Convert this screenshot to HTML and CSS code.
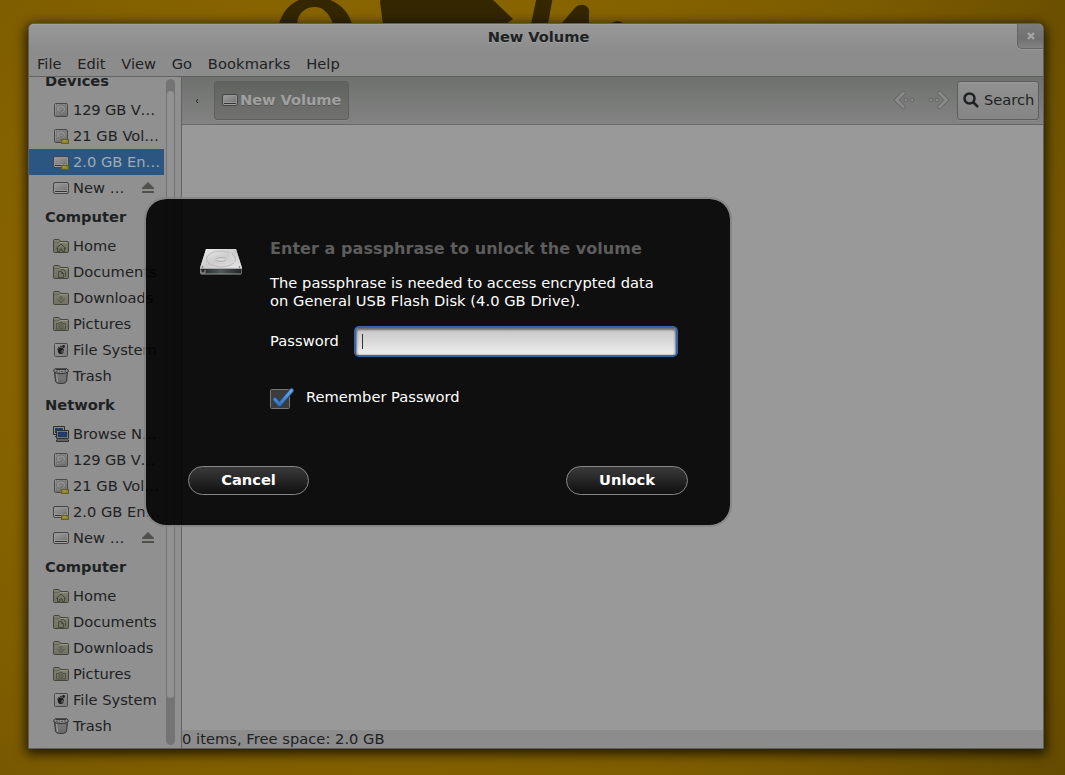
FILE: index.html
```html
<!DOCTYPE html>
<html lang="en">
<head>
<meta charset="utf-8">
<title>New Volume</title>
<link rel="stylesheet" href="styles.css">
</head>
<body>
<svg class="defs" aria-hidden="true">
  <defs>
    <linearGradient id="gm" x1="0" y1="0" x2="1" y2="1"><stop offset="0" stop-color="#999"/><stop offset="1" stop-color="#777"/></linearGradient>
    <linearGradient id="gf" x1="0" y1="0" x2="0" y2="1"><stop offset="0" stop-color="#7f8070"/><stop offset="1" stop-color="#717263"/></linearGradient>
    <linearGradient id="gd" x1="0" y1="0" x2="1" y2="1"><stop offset="0" stop-color="#eee"/><stop offset=".5" stop-color="#ccc"/><stop offset="1" stop-color="#e6e6e6"/></linearGradient>
    <linearGradient id="ge" x1="0" y1="0" x2="1" y2="0"><stop offset="0" stop-color="#222"/><stop offset=".5" stop-color="#50585a"/><stop offset="1" stop-color="#222"/></linearGradient>
    <linearGradient id="gc" x1="0" y1="0" x2="0" y2="1"><stop offset="0" stop-color="#6aa7e6"/><stop offset="1" stop-color="#3674b8"/></linearGradient>
    <symbol id="hdd" viewBox="0 0 16 16">
      <rect x="1.5" y="1.5" width="13" height="13" rx="1.2" fill="url(#gm)" stroke="#484848"/>
      <path d="M2.5 13h11" stroke="#606060"/>
      <ellipse cx="8" cy="7" rx="4.800" ry="4.200" fill="#8f8f8f" stroke="#6c6c6c" stroke-width=".9"/>
      <path d="M5 9.500q1 1 3 .3l3-2.300M6 7.500q.5-1.500 2.500-1.500t1.500 1.500-2.500 1.200" fill="none" stroke="#696969" stroke-width=".9"/>
      <path d="M3 3h1M12 3h1M3 11h1M12 11h1" stroke="#5d5d5d"/>
    </symbol>
    <symbol id="lock" viewBox="0 0 8 8">
      <path d="M2.500 4V2.300q0-1 1.500-1t1.500 1V4" fill="none" stroke="#77745b"/>
      <rect x=".5" y="3.500" width="7" height="4" fill="#8b8428" stroke="#646023"/>
      <path d="M2 5h3" stroke="#aaa467"/>
    </symbol>
    <symbol id="usb" viewBox="0 0 16 16">
      <rect x=".5" y="2.500" width="15" height="11" rx="1.500" fill="#969696" stroke="#454545"/>
      <path d="M2 4h12v6H2z" fill="url(#gm)"/>
      <path d="M2 11.500h12" stroke="#333"/>
      <path d="M2 12.500h12" stroke="#a0a0a0"/>
    </symbol>
    <symbol id="hddlock" viewBox="0 0 16 16"><use href="#hdd" width="16" height="16"/><use href="#lock" x="8" y="8" width="8" height="8"/></symbol>
    <symbol id="usblock" viewBox="0 0 16 16"><use href="#usb" width="16" height="16"/><use href="#lock" x="8" y="8" width="8" height="8"/></symbol>
    <symbol id="folder" viewBox="0 0 16 16">
      <path d="M.5 2.500q0-1 1-1h4q1 0 1.500 1l.5 1h7q1 0 1 1v9q0 1-1 1h-13q-1 0-1-1z" fill="url(#gf)" stroke="#43443a"/>
      <path d="M1.500 5.500h4l1.500-1h7.500" fill="none" stroke="#999985"/>
      <path d="M1 5h4.500L7 3.500" fill="none" stroke="#4b4c41" stroke-width=".8"/>
    </symbol>
    <symbol id="home" viewBox="0 0 16 16"><use href="#folder" width="16" height="16"/><path d="M2.800 10.800 8 6l5.200 4.800M4.500 10v3.500h2.300v-2.500h2.400v2.500h2.300V10" fill="none" stroke="#43443a"/></symbol>
    <symbol id="docs" viewBox="0 0 16 16"><use href="#folder" width="16" height="16"/><path d="M5.500 7.500h3l2 2v4h-5zM8.500 7.500v2h2M7.500 5.700h3q2 1 2 3v4" fill="none" stroke="#43443a" stroke-width=".9"/></symbol>
    <symbol id="down" viewBox="0 0 16 16"><use href="#folder" width="16" height="16"/><path d="m4.300 8.700 3.700 3.800 3.700-3.800M8 6v1M8 8v2M6.300 7.700h1M8.700 7.700h1" fill="none" stroke="#43443a" stroke-width=".9"/></symbol>
    <symbol id="pics" viewBox="0 0 16 16"><use href="#folder" width="16" height="16"/><path d="M3.500 7.500H6l1-1.200h2l1 1.200h2.500v5.500h-9z" fill="none" stroke="#4f5045"/><circle cx="8" cy="10" r="2.200" fill="none" stroke="#4f5045"/><circle cx="8" cy="10" r=".8" fill="#4f5045"/></symbol>
    <symbol id="fs" viewBox="0 0 16 16">
      <rect x="1.500" y="1.500" width="13" height="13" rx="1" fill="url(#gm)" stroke="#484848"/>
      <ellipse cx="7.800" cy="8.700" rx="3" ry="3.200" fill="#1d1d1d"/>
      <circle cx="10.500" cy="4.500" r="1.400" fill="#222"/><circle cx="7.900" cy="4.500" r=".8" fill="#222"/><circle cx="5.900" cy="5.400" r=".7" fill="#222"/><circle cx="4.500" cy="7" r=".6" fill="#222"/>
      <path d="M8 9.200q1.800-1 2.200-.2-.1 1.500-1.700 1.500" fill="none" stroke="#888" stroke-width=".8"/>
    </symbol>
    <symbol id="trash" viewBox="0 0 16 16">
      <path d="M1.500 4h13l-1 9.500Q12.700 15.500 8 15.500t-5.500-2z" fill="#636363" stroke="#343434"/>
      <path d="M4 6v8M6 6v9M8 6v9M10 6v9M12 6v8M3 7h10M3 9h10M3 11h10" stroke="#858585" stroke-width=".6"/>
      <path d="M3.600 5.500 4.500 14" stroke="#aaa" stroke-width=".8"/>
      <path d="M2 .8h12q1.400 1 1.300 2.700Q14 5.500 8 5.500T.7 3.500Q.6 1.800 2 .8z" fill="#8d8d8d" stroke="#303030"/>
      <path d="M3 1.500h10" stroke="#353535"/><path d="M3 3.200h2M6 3h1M8 3.500h2M11 3h2" stroke="#555"/>
    </symbol>
    <symbol id="net" viewBox="0 0 16 16">
      <path d="M.5.500h11v8H.5zM2 10.500h4" fill="#8d8d84" stroke="#2e2f2b"/>
      <path d="M2 2h8v5H2z" fill="#1d3e69"/>
      <path d="M3.500 4.500h12v8h-12zM3.500 14h12v1.500h-12z" fill="#989890" stroke="#2e2f2b"/>
      <path d="M5 6h9v5H5z" fill="#203f70" stroke="#172948" stroke-width=".6"/>
    </symbol>
    <symbol id="arrow" viewBox="0 0 22 22">
      <path class="edge" d="M10.500 4 3.500 11l7 7"/><path class="fill" d="M10.500 4 3.500 11l7 7"/>
      <circle cx="13" cy="11" r="1.900"/><circle cx="19" cy="11" r="1.900"/>
    </symbol>
    <symbol id="eject" viewBox="0 0 12 12"><path d="M6 0 12 6v1H0V6z" fill="#50504d"/><path d="M0 9h12v2H0z" fill="#50504d"/></symbol>
  </defs>
</svg>
<main class="desktop">
  <svg class="wallpaper-art" viewBox="0 0 400 40" aria-hidden="true">
    <path d="M19 24C23 9 35-3 54-3c20 0 34 12 38 27H73C69 13 63 7 55 7 45 7 38 13 37 24z"/>
    <path d="M120 2l1-4h110l22 21-7 5H123zM277-4h16l-5 28h-17zM301 24l13-15q4-5 10-4 6 2 5 8v11zM351 24q6-6 13 0z"/>
  </svg>
  <section class="window">
    <header class="titlebar"><span class="title">New Volume</span>
      <button class="close" aria-label="Close"><svg viewBox="0 0 8 8"><path d="m1 1 6 6M7 1 1 7"/></svg></button></header>
    <nav class="menubar"><span>File</span><span>Edit</span><span>View</span><span>Go</span><span class="wide">Bookmarks</span><span>Help</span></nav>
    <div class="body">
      <aside class="sidebar">
        <div class="places">
          <h2>Devices</h2>
          <div class="place"><svg><use href="#hdd"/></svg><span class="tight">129 GB V…</span></div>
          <div class="place"><svg><use href="#hddlock"/></svg>21 GB Vol…</div>
          <div class="place selected"><svg><use href="#usblock"/></svg>2.0 GB En…</div>
          <div class="place"><svg><use href="#usb"/></svg>New …<svg class="eject"><use href="#eject"/></svg></div>
          <h2>Computer</h2>
          <div class="place"><svg><use href="#home"/></svg>Home</div>
          <div class="place"><svg><use href="#docs"/></svg>Documents</div>
          <div class="place"><svg><use href="#down"/></svg>Downloads</div>
          <div class="place"><svg><use href="#pics"/></svg>Pictures</div>
          <div class="place"><svg><use href="#fs"/></svg>File System</div>
          <div class="place"><svg><use href="#trash"/></svg>Trash</div>
          <h2>Network</h2>
          <div class="place"><svg><use href="#net"/></svg>Browse N…</div>
          <div class="place"><svg><use href="#hdd"/></svg><span class="tight">129 GB V…</span></div>
          <div class="place"><svg><use href="#hddlock"/></svg>21 GB Vol…</div>
          <div class="place"><svg><use href="#usblock"/></svg>2.0 GB En…</div>
          <div class="place"><svg><use href="#usb"/></svg>New …<svg class="eject"><use href="#eject"/></svg></div>
          <h2>Computer</h2>
          <div class="place"><svg><use href="#home"/></svg>Home</div>
          <div class="place"><svg><use href="#docs"/></svg>Documents</div>
          <div class="place"><svg><use href="#down"/></svg>Downloads</div>
          <div class="place"><svg><use href="#pics"/></svg>Pictures</div>
          <div class="place"><svg><use href="#fs"/></svg>File System</div>
          <div class="place"><svg><use href="#trash"/></svg>Trash</div>
        </div>
        <div class="scrollbar"><div class="thumb"></div></div>
      </aside>
      <div class="pane">
        <div class="toolbar">
          <svg class="tick" viewBox="0 0 4 6"><path d="M3 1 1.300 3 3 5"/></svg>
          <div class="crumb"><svg><use href="#usb"/></svg>New Volume</div>
          <svg class="nav"><use href="#arrow"/></svg>
          <svg class="nav forward"><use href="#arrow"/></svg>
          <button class="search"><svg viewBox="0 0 16 16"><circle cx="6.500" cy="6.500" r="5"/><path d="m10 10 5 5"/></svg>Search</button>
        </div>
        <div class="files"></div>
        <footer class="status">0 items, Free space: 2.0 GB</footer>
      </div>
    </div>
  </section>
  <section class="dialog" role="dialog">
    <div class="message">
      <svg class="drive" viewBox="0 0 44 28">
        <path d="M7 1h30l6 19v6H1v-6z" fill="#aaa"/>
        <path d="M7 1h30l6 19H1z" fill="url(#gd)"/>
        <ellipse cx="22" cy="11" rx="14.500" ry="8" fill="none" stroke="#bbb"/>
        <ellipse cx="22" cy="11.500" rx="5" ry="1.800" fill="#ddd" stroke="#aaa"/>
        <path d="m31 4 5 13" stroke="#ddd" fill="none"/>
        <path d="M1.500 21h41v5h-41z" fill="url(#ge)"/>
        <path d="M2 22v3h4v-3M2 26h40" fill="none" stroke="#999"/>
        <circle cx="3.500" cy="19" r=".8" fill="#555"/><circle cx="40.500" cy="19" r=".8" fill="#555"/>
      </svg>
      <div class="form">
        <h1>Enter a passphrase to unlock the volume</h1>
        <p>The passphrase is needed to access encrypted data<br>on General USB Flash Disk (4.0 GB Drive).</p>
        <div class="field"><span>Password</span><div class="entry"><i class="caret"></i></div></div>
        <div class="remember"><svg viewBox="0 0 26 24"><rect x=".5" y="2.500" width="19" height="19" rx="1" /><path class="co" d="m5 12.500 4.500 5L21.500 3.500"/><path class="ci" d="m5 12.500 4.500 5L21.500 3.500"/></svg><span>Remember Password</span></div>
      </div>
    </div>
    <div class="actions"><button>Cancel</button><button class="unlock">Unlock</button></div>
  </section>
</main>
</body>
</html>
```

FILE: styles.css
```css
* { box-sizing: border-box; }
body { margin: 0; font: 14.667px/18px "DejaVu Sans", sans-serif; color: #1e2223; }
h1, h2, p { margin: 0; }
button { font: inherit; color: inherit; padding: 0; }
.defs { position: absolute; width: 0; height: 0; }
.desktop {
  position: relative; width: 1065px; height: 775px; padding: 23px 21px 26px 28px; overflow: hidden;
  background: radial-gradient(ellipse 760px 700px at 400px 330px, #8a6700 0, #876400 50%, #7b5b00 78%, #5f4700 115%);
}
.wallpaper-art { position: absolute; left: 260px; top: 0; width: 400px; height: 40px; fill: #342700; }
.window {
  position: relative; display: flex; flex-direction: column; height: 726px; border: 1px solid #5e5e5e;
  border-radius: 6px 6px 0 0; background: #8c8c8c; box-shadow: 0 3px 12px 2px rgba(0,0,0,.75);
}
.titlebar {
  display: flex; justify-content: flex-end; position: relative; height: 27px;
  border-radius: 5px 5px 0 0; background: linear-gradient(#989898, #8c8c8c); box-shadow: inset 0 1px #a0a0a0;
}
.title { flex: 1; padding: 4px 0 0 31px; text-align: center; font-weight: bold; letter-spacing: -.05px; text-shadow: 0 1px #a0a0a0; }
.close {
  display: grid; place-items: center; width: 26px; height: 25px; border: solid #666; border-width: 0 0 1px 1px;
  border-radius: 0 5px 0 5px; background: linear-gradient(#7c7c7c, #707070 60%, #838383); box-shadow: 0 1px #999;
}
.close svg { width: 8px; height: 8px; stroke: #a5a5a5; stroke-width: 2.4; }
.menubar { display: flex; gap: 15.700px; height: 26px; padding: 4px 8px 0; border-bottom: 1px solid #616161; }
.menubar .wide { letter-spacing: .1px; }
.body { display: flex; flex: 1; min-height: 0; }
.sidebar { display: flex; width: 153px; border-right: 1px solid #626262; background: #909090; overflow: hidden; }
.places { width: 135px; margin-top: -12px; white-space: nowrap; }
.places h2 { height: 32px; padding: 7px 0 0 16px; font-size: 14.667px; line-height: 18px; font-weight: bold; }
.place { display: flex; align-items: center; gap: 4px; height: 26px; padding-left: 24px; }
.place .tight { letter-spacing: -.15px; }
.place svg { flex: none; width: 16px; height: 16px; }
.place .eject { width: 12px; height: 12px; margin: 0 10px 0 auto; }
.place.selected { background: #2b5681; color: #a0aab3; }
.scrollbar {
  width: 9px; height: 666px; margin: 2px 0 0 2px; padding: 12px 1px 0; border-radius: 5px;
  background: #747474;
}
.thumb { height: 607px; border-radius: 4px; background: #929292; }
.pane { display: flex; flex: 1; flex-direction: column; }
.toolbar {
  display: flex; align-items: center; height: 48px; padding: 0 4px 0 13px; border-bottom: 1px solid #686868;
  background: linear-gradient(#6f716f, #828382);
}
.tick { width: 4px; height: 6px; fill: none; stroke: #252525; }
.crumb {
  display: flex; align-items: center; gap: 2px; width: 135px; height: 39px; margin: 0 auto 0 15px; padding: 0 0 1px 7px;
  border: 1px solid #5d5e5d; border-radius: 3px; background: linear-gradient(#61635f, #717270);
  color: #a0a0a0; font-weight: bold; letter-spacing: -.07px; text-shadow: 0 1px #555; white-space: nowrap; box-shadow: 0 1px #8a8a8a;
}
.crumb svg { width: 16px; height: 16px; }
.nav { width: 22px; height: 22px; margin: -2px 13px 0 0; fill: none; overflow: visible; }
.nav.forward { transform: scaleX(-1); margin-right: 7px; }
.edge, .fill { stroke-linecap: round; stroke-linejoin: miter; }
.edge { stroke: #646564; stroke-width: 4.500px; }
.fill { stroke: #8a8b8a; stroke-width: 2.700px; }
.nav circle, #arrow circle { stroke: #666; fill: #8a8b8a; }
.search {
  display: flex; align-items: center; gap: 5px; width: 82px; height: 39px; padding: 0 0 1px 5px;
  border: 1px solid #5d5d5d; border-radius: 3px; background: linear-gradient(#919191, #858585);
  box-shadow: inset 0 1px #999, 0 1px #8a8a8a;
}
.search svg { width: 16px; height: 16px; fill: none; stroke: #1e2223; stroke-width: 2.500; }
.files { flex: 1; background: #999; }
.status { height: 18px; background: #8c8c8c; letter-spacing: .03px; white-space: nowrap; }
.dialog {
  position: absolute; left: 144px; top: 197px; width: 588px; height: 330px; padding: 41px 42px 0;
  border: 2px solid rgba(132,132,132,.85); border-radius: 22px; background: rgba(0,0,0,.9); background-clip: padding-box; color: #fff;
}
.message { display: flex; height: 226px; padding-left: 12px; }
.drive { width: 44px; height: 28px; margin: 8px 27px 0 -1px; }
.form { width: 408px; }
.form h1 { font-size: 16px; line-height: 18px; letter-spacing: .05px; color: #5d5d5d; white-space: nowrap; }
.form p { margin-top: 16px; letter-spacing: .04px; white-space: nowrap; }
.field { display: flex; align-items: center; height: 31px; margin-top: 16px; }
.field span { width: 84px; padding-bottom: 2px; letter-spacing: .05px; }
.entry {
  width: 324px; height: 31px; padding: 6px 0 0 6px; border: 2px solid #3465a4; border-radius: 5px;
  background: linear-gradient(#c5c5c5, #eee); box-shadow: inset 0 1px 2px 1px rgba(0,0,0,.45);
}
.caret { display: block; width: 1px; height: 15px; background: #333; }
.remember { display: flex; gap: 10px; margin-top: 29px; }
.remember svg { width: 26px; height: 24px; margin-top: 1px; fill: none; }
.remember span { padding-top: 2px; }
.remember rect { fill: #3c3c3c; stroke: #777; }
.co { stroke: #1d4779; stroke-width: 5; }
.ci { stroke: url(#gc); stroke-width: 3.200; }
.co, .ci { stroke-linecap: round; stroke-linejoin: round; }
.actions { display: flex; justify-content: space-between; }
.actions button {
  width: 121px; height: 29px; padding-bottom: 2px; border: 1px solid #888; border-radius: 15px; font-weight: bold; color: #fff;
  background: linear-gradient(#3a3a3a, #101010);
}
.actions .unlock { width: 122px; }
```
